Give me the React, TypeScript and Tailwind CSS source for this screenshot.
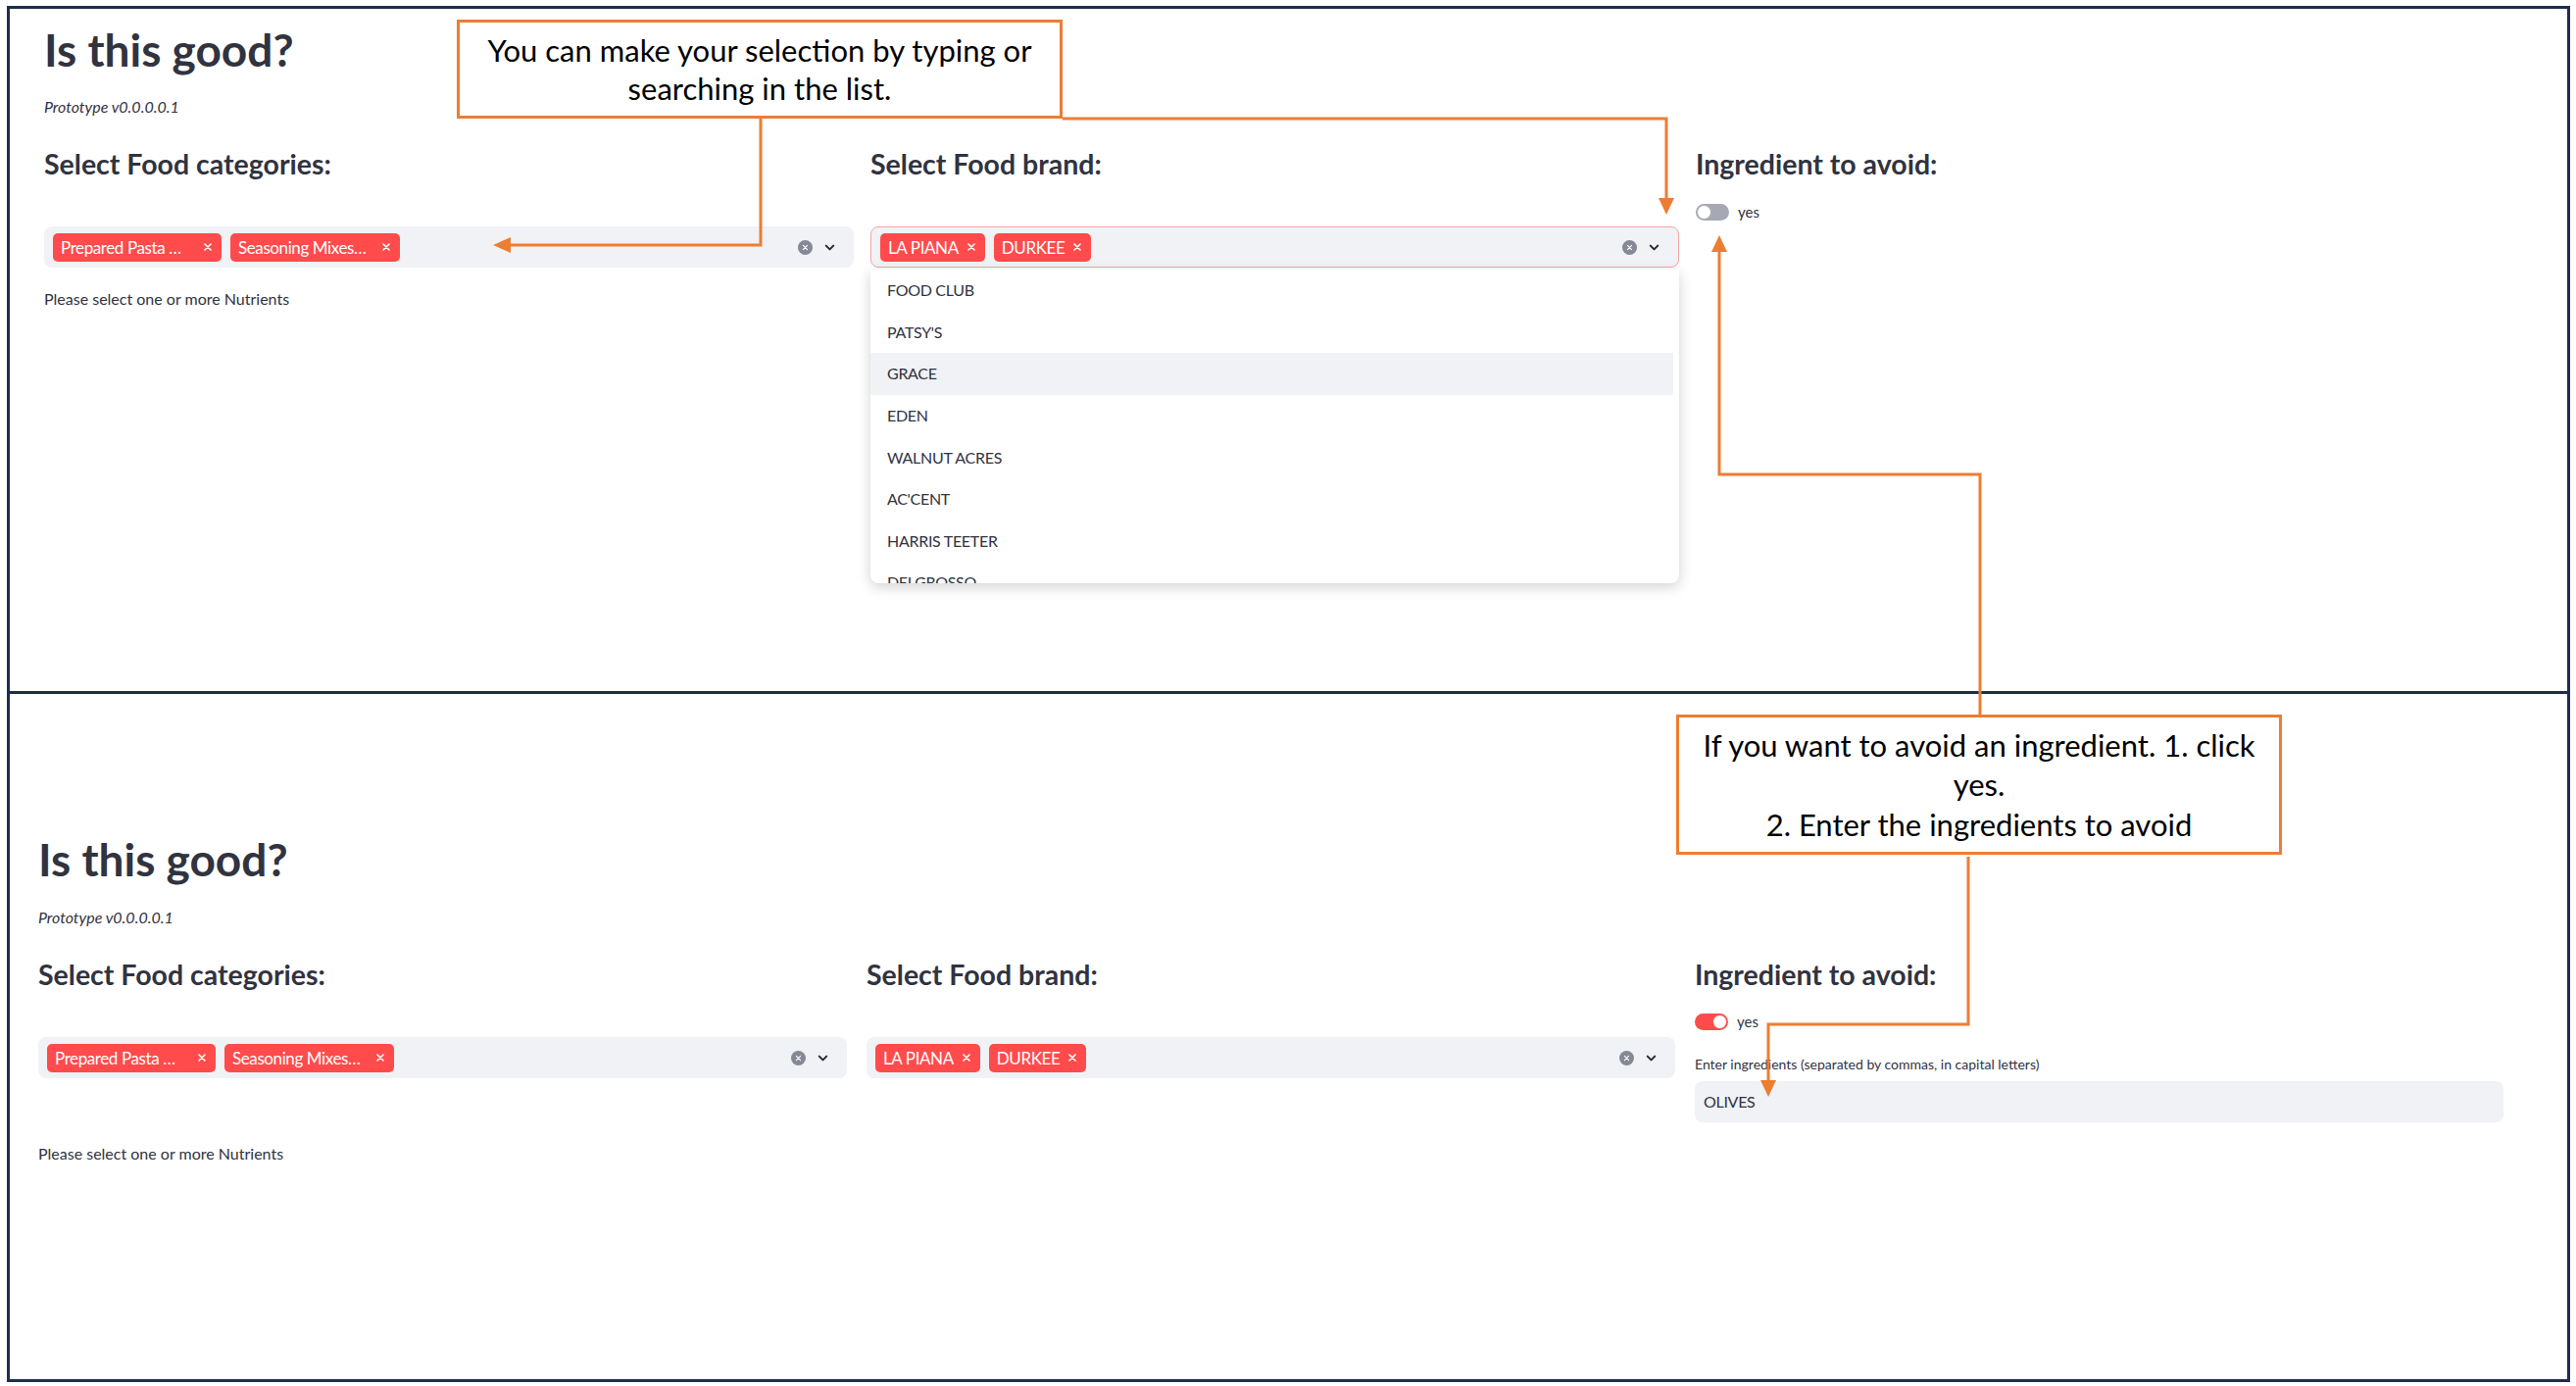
const brands = ["FOOD CLUB", "PATSY'S", "GRACE", "EDEN", "WALNUT ACRES", "AC'CENT", "HARRIS TEETER", "DELGROSSO"];

function XMark({ className }: { className?: string }) {
  return (
    <svg viewBox="0 0 10 10" className={className} fill="none" stroke="currentColor" strokeWidth="1.6" strokeLinecap="round">
      <path d="M2 2l6 6M8 2l-6 6" />
    </svg>
  );
}

function Tag({ label, className = "" }: { label: string; className?: string }) {
  return (
    <div className={`flex h-[29px] items-center justify-between gap-[8px] rounded-[5px] bg-[#ff4b4b] pl-[8px] pr-[9px] text-[17px] leading-none tracking-[-0.4px] text-white ${className}`}>
      <span className="whitespace-nowrap">{label}</span>
      <XMark className="h-[10px] w-[10px]" />
    </div>
  );
}

function MultiSelect({ tags, focused = false }: { tags: { label: string; w?: string }[]; focused?: boolean }) {
  return (
    <div className={`flex h-[42px] items-center rounded-[8px] bg-[#f0f2f6] pl-[9px] pr-[17px] ${focused ? "border border-[#f7a3a3]" : ""}`}>
      <div className="flex flex-1 items-center gap-[9px]">
        {tags.map((t) => (
          <Tag key={t.label} label={t.label} className={t.w ?? ""} />
        ))}
      </div>
      <div className="flex items-center gap-[10px]">
        <div className="flex h-[15px] w-[15px] items-center justify-center rounded-full bg-[#868995] text-white">
          <XMark className="h-[7px] w-[7px]" />
        </div>
        <svg viewBox="0 0 24 24" className="h-[15px] w-[15px]" fill="none" stroke="#262730" strokeWidth="3.2" strokeLinecap="round" strokeLinejoin="round">
          <path d="M6 9l6 6 6-6" />
        </svg>
      </div>
    </div>
  );
}

function Toggle({ on }: { on: boolean }) {
  return (
    <div className="flex h-[17px] items-center gap-[9px]">
      <div className={`flex h-[17px] w-[34px] items-center rounded-full p-[1px] ${on ? "justify-end bg-[#ff4b4b]" : "justify-start bg-[#a6a9b4]"}`}>
        <div className={`h-[15px] w-[15px] rounded-full border bg-white ${on ? "border-[#ff4b4b]" : "border-[#a6a9b4]"}`} />
      </div>
      <span className="text-[15px] leading-none">yes</span>
    </div>
  );
}

const catTags = [
  { label: "Prepared Pasta …", w: "w-[172px]" },
  { label: "Seasoning Mixes…", w: "w-[173px]" },
];
const brandTags = [{ label: "LA PIANA" }, { label: "DURKEE" }];

function Heading({ children }: { children: string }) {
  return <h3 className="text-[28.5px] font-bold leading-[36px]">{children}</h3>;
}

export default function App() {
  return (
    <div className="relative h-[1414px] w-[2628px] overflow-hidden bg-white pl-[7px] pt-[6px] font-['Lato',sans-serif] text-[#31333f]">
      <div className="flex h-[1404px] w-[2615px] flex-col border-[3px] border-[#1f2e4d]">
        {/* top screenshot: dropdown open */}
        <section className="h-[699px] shrink-0 border-b-[3px] border-[#1f2e4d] pl-[35px] pt-[14px]">
          <h1 className="text-[46px] font-bold leading-[56px]">Is this good?</h1>
          <p className="mt-[20px] text-[16px] italic leading-[20px]">Prototype v0.0.0.0.1</p>
          <div className="mt-[30px] grid grid-cols-[826px_825px_826px] gap-x-[17px]">
            <div>
              <Heading>Select Food categories:</Heading>
              <div className="mt-[46px]">
                <MultiSelect tags={catTags} />
              </div>
            </div>
            <div>
              <Heading>Select Food brand:</Heading>
              <div className="relative mt-[46px]">
                <MultiSelect tags={brandTags} focused />
                <div className="absolute left-0 top-[44px] z-10 h-[320px] w-full overflow-hidden rounded-b-[8px] bg-white shadow-[0_4px_14px_rgba(0,0,0,0.18)]">
                  {brands.map((b) => (
                    <div key={b} className={`flex h-[42.6px] items-center pl-[17px] text-[16px] tracking-[-0.3px] ${b === "GRACE" ? "mr-[6px] bg-[#f0f2f6]" : ""}`}>
                      {b}
                    </div>
                  ))}
                </div>
              </div>
            </div>
            <div>
              <Heading>Ingredient to avoid:</Heading>
              <div className="mt-[23px]">
                <Toggle on={false} />
              </div>
            </div>
          </div>
          <p className="mt-[22px] text-[16px] leading-[20px]">Please select one or more Nutrients</p>
        </section>

        {/* bottom screenshot: ingredient toggle on */}
        <section className="flex-1 pl-[29px] pt-[141px]">
          <h1 className="text-[46px] font-bold leading-[56px]">Is this good?</h1>
          <p className="mt-[21px] text-[16px] italic leading-[20px]">Prototype v0.0.0.0.1</p>
          <div className="mt-[30px] grid grid-cols-[825px_825px_825px] gap-x-[20px]">
            <div>
              <Heading>Select Food categories:</Heading>
              <div className="mt-[46px]">
                <MultiSelect tags={catTags} />
              </div>
            </div>
            <div>
              <Heading>Select Food brand:</Heading>
              <div className="mt-[46px]">
                <MultiSelect tags={brandTags} />
              </div>
            </div>
            <div>
              <Heading>Ingredient to avoid:</Heading>
              <div className="mt-[22px]">
                <Toggle on />
              </div>
              <p className="mt-[25px] text-[14px] leading-[20px]">Enter ingredients (separated by commas, in capital letters)</p>
              <div className="mt-[7px] flex h-[42px] items-center rounded-[8px] bg-[#f0f2f6] pl-[9px] text-[16px] tracking-[-0.3px]">OLIVES</div>
            </div>
          </div>
          <p className="mt-[22px] text-[16px] leading-[20px]">Please select one or more Nutrients</p>
        </section>
      </div>

      {/* callout connectors */}
      <svg className="pointer-events-none absolute left-0 top-0 z-20 h-[1414px] w-[2628px]" viewBox="0 0 2628 1414" fill="none">
        <g stroke="#ed7d31" strokeWidth="3">
          <polyline points="776,121 776,250 518,250" />
          <polyline points="1084,121 1700,121 1700,204" />
          <polyline points="1754,254 1754,484 2020,484 2020,729" />
          <polyline points="2008,874 2008,1045 1804,1045 1804,1104" />
        </g>
        <g fill="#ed7d31">
          <polygon points="503,250 521,242 521,258" />
          <polygon points="1700,219 1692,202 1708,202" />
          <polygon points="1754,240 1746,257 1762,257" />
          <polygon points="1804,1119 1796,1102 1812,1102" />
        </g>
      </svg>

      <div className="absolute left-[466px] top-[20px] z-30 flex h-[101px] w-[618px] items-center justify-center border-[3px] border-[#ed7d31] bg-white text-center text-[31px] leading-[39px] text-black">
        <p>
          You can make your selection by typing or
          <br />
          searching in the list.
        </p>
      </div>
      <div className="absolute left-[1710px] top-[729px] z-30 flex h-[143px] w-[618px] items-center justify-center border-[3px] border-[#ed7d31] bg-white text-center text-[31px] leading-[40.5px] text-black">
        <p>
          If you want to avoid an ingredient. 1. click
          <br />
          yes.
          <br />
          2. Enter the ingredients to avoid
        </p>
      </div>
    </div>
  );
}
